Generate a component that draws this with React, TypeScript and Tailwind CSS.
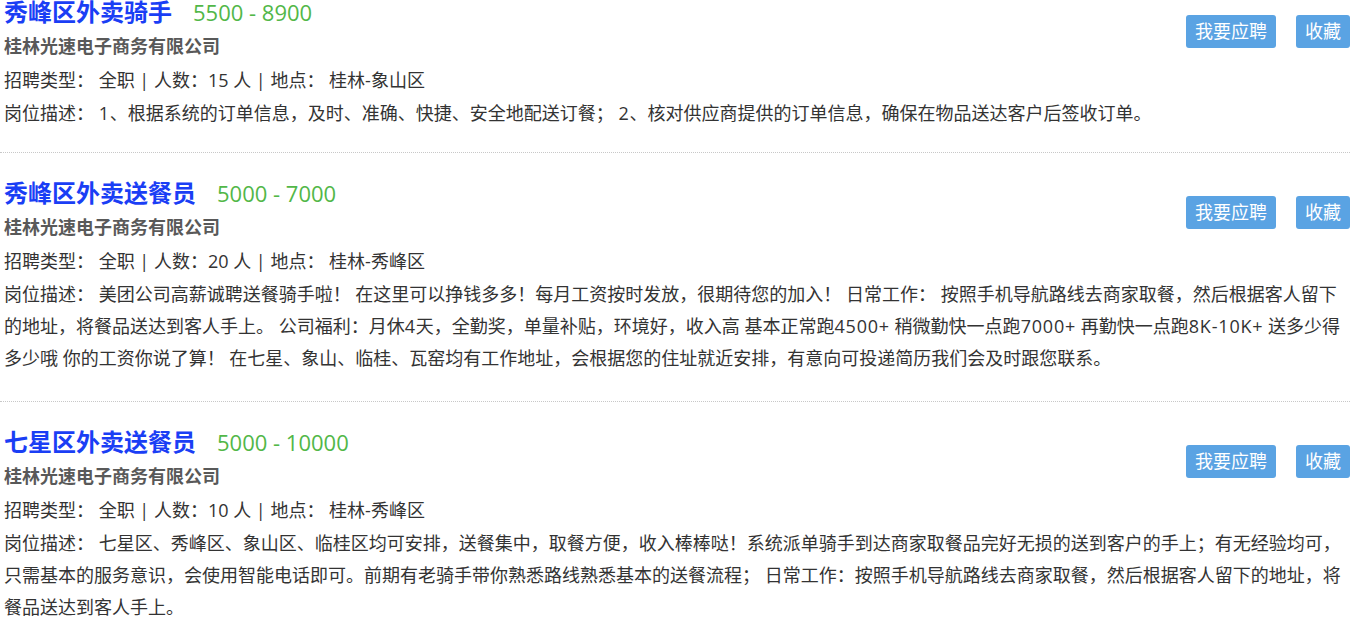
import React from "react";

type Job = {
  title: string;
  salary: string;
  company: string;
  count: string;
  place: string;
  desc: string;
};

const jobs: Job[] = [
  {
    title: "秀峰区外卖骑手",
    salary: "5500 - 8900",
    company: "桂林光速电子商务有限公司",
    count: "15",
    place: "桂林-象山区",
    desc: "1、根据系统的订单信息，及时、准确、快捷、安全地配送订餐； 2、核对供应商提供的订单信息，确保在物品送达客户后签收订单。",
  },
  {
    title: "秀峰区外卖送餐员",
    salary: "5000 - 7000",
    company: "桂林光速电子商务有限公司",
    count: "20",
    place: "桂林-秀峰区",
    desc: "美团公司高薪诚聘送餐骑手啦！ 在这里可以挣钱多多！每月工资按时发放，很期待您的加入！ 日常工作： 按照手机导航路线去商家取餐，然后根据客人留下的地址，将餐品送达到客人手上。 公司福利：月休4天，全勤奖，单量补贴，环境好，收入高 基本正常跑4500+ 稍微勤快一点跑7000+ 再勤快一点跑8K-10K+ 送多少得多少哦 你的工资你说了算！ 在七星、象山、临桂、瓦窑均有工作地址，会根据您的住址就近安排，有意向可投递简历我们会及时跟您联系。",
  },
  {
    title: "七星区外卖送餐员",
    salary: "5000 - 10000",
    company: "桂林光速电子商务有限公司",
    count: "10",
    place: "桂林-秀峰区",
    desc: "七星区、秀峰区、象山区、临桂区均可安排，送餐集中，取餐方便，收入棒棒哒！系统派单骑手到达商家取餐品完好无损的送到客户的手上；有无经验均可，只需基本的服务意识，会使用智能电话即可。前期有老骑手带你熟悉路线熟悉基本的送餐流程； 日常工作：按照手机导航路线去商家取餐，然后根据客人留下的地址，将餐品送达到客人手上。",
  },
];

function Desc({ text }: { text: string }) {
  const parts = text.split(/([0-9A-Za-z+\-]+)/);
  return (
    <>
      {parts.map((p, i) =>
        i % 2 === 1 ? (
          <span key={i} className="tracking-[0.8px]">
            {p}
          </span>
        ) : (
          <React.Fragment key={i}>{p}</React.Fragment>
        )
      )}
    </>
  );
}

function JobItem({ job, first }: { job: Job; first: boolean }) {
  return (
    <li
      className={
        "border-b border-dotted border-[#c8c8c8] pl-[4px] pr-0 " +
        (first ? "pt-0 -mt-[28px] pb-[23px]" : "pt-[20px] pb-[27px]")
      }
    >
      <div className={first ? "pt-[20px]" : ""}>
        <div className="float-right mt-[23px] flex gap-[20px]">
          <button className="h-[33px] px-[9px] rounded-[3px] bg-[#5aa3e3] text-white text-[18px] leading-[33px]">
            我要应聘
          </button>
          <button className="h-[33px] px-[9px] rounded-[3px] bg-[#5aa3e3] text-white text-[18px] leading-[33px]">
            收藏
          </button>
        </div>
        <div className="h-[40px] leading-[40px] whitespace-nowrap">
          <span className="text-[24px] font-bold text-[#1a3ef5]">{job.title}</span>
          <span className="ml-[21px] text-[22px] text-[#52b748]">{job.salary}</span>
        </div>
        <div className="leading-[28px] text-[18px] font-bold text-[#595959]">{job.company}</div>
        <div className="mt-[4px] leading-[32px] text-[18px] text-[#333333]">
          招聘类型： 全职 | 人数：{job.count} 人 | 地点： {job.place}
        </div>
        <div className="mt-[1px] leading-[32px] text-[18px] text-[#333333]">
          岗位描述： <Desc text={job.desc} />
        </div>
      </div>
    </li>
  );
}

export default function App() {
  return (
    <div
      className="w-[1352px] h-[632px] overflow-hidden bg-white"
      style={{ fontFamily: '"Open Sans", "Noto Sans CJK SC", sans-serif' }}
    >
      <ul className="w-[1350px]">
        {jobs.map((j, i) => (
          <JobItem key={i} job={j} first={i === 0} />
        ))}
      </ul>
    </div>
  );
}
